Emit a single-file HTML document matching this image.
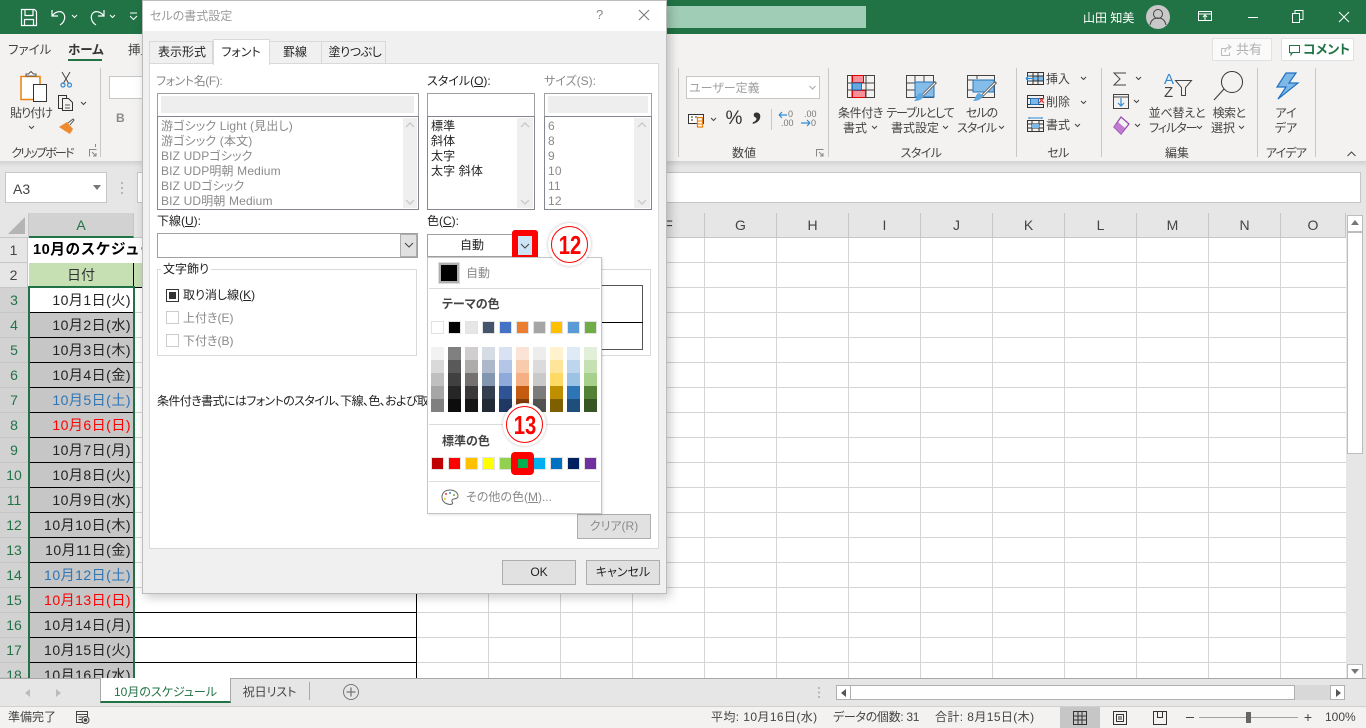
<!DOCTYPE html>
<html lang="ja"><head><meta charset="utf-8"><title>Excel</title>
<style>
html,body{margin:0;padding:0;width:1366px;height:728px;overflow:hidden;background:#fff}
body{position:relative;font-family:"Liberation Sans","Noto Sans CJK JP",sans-serif;font-size:12px;color:#222;font-feature-settings:"palt"}
div,span,svg{position:absolute;box-sizing:border-box}
u{text-decoration:underline}
.t{white-space:nowrap;line-height:16px;height:16px}
.c{transform:translateX(-50%)}
.g{color:#8a8a8a}
.rh{left:0;width:28px;height:25px;line-height:25px;text-align:center;font-size:14px;color:#444;background:#e6e6e6;border-bottom:1px solid #c6c6c6;border-right:1px solid #c6c6c6}
.rs{background:#d2d2d2;color:#217346;border-right:none}
.d{left:29px;width:105px;height:25px;line-height:24px;text-align:right;padding-right:3px;font-size:14px;letter-spacing:.5px;background:#c6c6c6;color:#222;border-bottom:1px solid #000;white-space:nowrap}
.b{left:134px;width:283px;height:25px;background:#fff;border-bottom:1px solid #000;border-right:1px solid #000}
.ch{top:213px;height:25px;width:72px;line-height:24px;text-align:center;font-size:14px;color:#444;background:#e6e6e6;border-right:1px solid #c6c6c6;border-bottom:1px solid #c6c6c6}
.dv{width:1px;background:#c8c8c8;top:68px;height:89px}
.box{background:#fff;border:1px solid #a0a0a0}
.sb{background:#efefef}
.btn{background:#e1e1e1;border:1px solid #adadad;text-align:center;line-height:22px}
.li{white-space:nowrap;line-height:15px;height:15px;letter-spacing:.15px}
.sep{background:#dcdcdc;height:1px;left:429px;width:171px}
.halo{width:43px;height:43px;border-radius:50%;background:#fff;box-shadow:0 0 3px rgba(0,0,0,.25)}
.ring{width:37px;height:37px;border-radius:50%;border:1.500px solid #f00;background:#fff}
.num{white-space:nowrap;height:28px;line-height:28px;font-size:26px;font-weight:bold;color:#f00;transform:translateX(-50%) scaleX(.78)}
</style></head><body>

<!-- title bar -->
<div style="left:0;top:0;width:1366px;height:34px;background:#217346"></div>
<div style="left:420px;top:6px;width:446px;height:22px;background:#a0cdb5"></div>
<svg style="left:0;top:0" width="145" height="34" fill="none" stroke="#fff" stroke-width="1.200">
<path d="M21.500 9.500h13l2 2v14h-15zM25 9.500v6h8v-6M24.500 25.500v-6h9v6"/>
<path d="M52 10v6h6M52.500 15.500c3-4 8-5 10.500-2.500 3 3 2 9-3 12"/>
<path d="M72 15l2.500 2.500 2.500-2.500M110 15l2.500 2.500 2.500-2.500" stroke-width="1"/>
<path d="M104 10v6h-6M103.500 15.500c-3-4-8-5-10.500-2.500-3 3-2 9 3 12"/>
<path d="M130 13h7M130 16l3.500 3.500 3.500-3.500" stroke-width="1"/>
</svg>
<span class="t" style="left:1083px;top:10px;color:#fff;font-size:12px">山田 知美</span>
<svg style="left:1145px;top:4px" width="26" height="26"><circle cx="13" cy="13" r="12" fill="#c8c8c8"/><circle cx="13" cy="10" r="4.500" fill="none" stroke="#444"/><path d="M5 21c1-5 4-7 8-7s7 2 8 7" fill="none" stroke="#444"/></svg>
<svg style="left:1190px;top:0" width="176" height="34" fill="none" stroke="#fff" stroke-width="1">
<path d="M8.500 11.500h13v9h-13zM8.500 14h13M15 20v-5M13 17l2-2 2 2"/>
<path d="M58 17.500h10"/>
<path d="M102.500 13.500h7v9h-7zM105 13v-2.500h8v9h-3.500"/>
<path d="M149 12l10 10M159 12l-10 10"/>
</svg>

<!-- ribbon -->
<div style="left:0;top:34px;width:1366px;height:127px;background:#f3f2f1"></div>
<div style="left:0;top:161px;width:1366px;height:6px;background:linear-gradient(#d2d2d2,#e6e6e6)"></div>
<span class="t" style="left:8px;top:42px;font-size:12.500px;color:#444">ファイル</span>
<span class="t" style="left:68px;top:42px;font-size:12.500px;font-weight:bold;color:#333">ホーム</span>
<div style="left:68px;top:59px;width:34px;height:2px;background:#217346"></div>
<span class="t" style="left:128px;top:42px;font-size:12.500px;color:#444">挿入</span>

<!-- clipboard -->
<svg style="left:0;top:60px" width="142" height="90" fill="none">
<path d="M21 16.500h19v23H21z" stroke="#e9820e" stroke-width="1.500" fill="#fff"/>
<path d="M26 16h10v-2h-2.500l-2.500-2.500-2.500 2.500H26z" stroke="#555" fill="#fff"/>
<path d="M33.500 24.500h13v17h-13z" stroke="#333" fill="#fff"/>
<path d="M62 12l7 12M70 12l-7 12" stroke="#444"/><circle cx="63" cy="25" r="2" stroke="#3d8fd6" stroke-width="1.300"/><circle cx="69.500" cy="25" r="2" stroke="#3d8fd6" stroke-width="1.300"/>
<path d="M58.500 35.500h8v13h-8z" stroke="#333"/><path d="M62.500 38.500h6l4 4v8h-10z" stroke="#333" fill="#f3f2f1"/><path d="M65 45h5M65 48h5" stroke="#555"/>
<path d="M81 42l2.500 2.500 2.500-2.500M29 66l2.500 2.500 2.500-2.500" stroke="#444"/>
<path d="M59 67l8-5 6 7-3 5-5-3z" fill="#ed8b30"/><path d="M68 63l5-4 1 1-4 5" stroke="#555"/>
<path d="M90.500 90h5M95.500 87v-3" stroke="#888"/>
</svg>
<span class="t c" style="left:31px;top:105px;color:#444;letter-spacing:-1px">貼り付け</span>
<span class="t c" style="left:42px;top:145px;color:#444;letter-spacing:-1.800px">クリップボード</span>
<svg style="left:88px;top:148px" width="10" height="10" fill="none" stroke="#888"><path d="M1.500 8.500v-7h7M4 4l4 4M8 5v3H5"/></svg>
<div class="dv" style="left:100px"></div>
<div style="left:109px;top:76px;width:40px;height:23px;background:#fff;border:1px solid #c6c6c6"></div>
<span class="t" style="left:116px;top:110px;font-weight:bold;color:#8a8a8a">B</span>

<!-- number -->
<div class="dv" style="left:678px"></div>
<div style="left:686px;top:76px;width:134px;height:23px;background:#fff;border:1px solid #c6c6c6"></div>
<span class="t g" style="left:689px;top:80px;color:#a0a0a0">ユーザー定義</span>
<svg style="left:808px;top:84px" width="10" height="8" fill="none" stroke="#aaa"><path d="M1.500 2l3 3 3-3"/></svg>
<svg style="left:686px;top:108px" width="140" height="24" fill="none">
<path d="M2.500 6.500h15v9h-15z" stroke="#333" fill="#fff"/><path d="M5 9h2M9 9h2M5 12h2" stroke="#333"/>
<path d="M11.500 9.500h5v9.500h-5z" stroke="#e9820e" fill="#fff" stroke-width="1.300"/><path d="M12 13h4M12 16h4" stroke="#e9820e"/>
<path d="M25 10l2.500 2.500 2.500-2.500" stroke="#444"/>
<path d="M85.500 1v21" stroke="#c8c8c8"/>
<path d="M93 7h8M93 7l3-3M93 7l3 3" stroke="#2e8bd6" stroke-width="1.200"/>
<path d="M115 15h9M124 15l-3-3M124 15l-3 3" stroke="#2e8bd6" stroke-width="1.200"/>
</svg>
<span class="t c" style="left:734px;top:111px;font-size:19px;color:#333">%</span>
<span class="t c" style="left:757px;top:98px;font-size:38px;font-weight:bold;color:#333;font-family:'Liberation Serif',serif">,</span>
<span class="t" style="left:788px;top:106px;font-size:9px;color:#777">0</span>
<span class="t" style="left:781px;top:115px;font-size:9px;color:#777">.00</span>
<span class="t" style="left:804px;top:106px;font-size:9px;color:#777">.00</span>
<span class="t" style="left:811px;top:115px;font-size:9px;color:#777">0</span>
<span class="t c" style="left:744px;top:145px;color:#444">数値</span>
<svg style="left:815px;top:148px" width="10" height="10" fill="none" stroke="#888"><path d="M1.500 8.500v-7h7M4 4l4 4M8 5v3H5"/></svg>

<!-- styles -->
<div class="dv" style="left:828px"></div>
<svg style="left:830px;top:65px" width="186" height="40" fill="none">
<g stroke="#444"><path d="M17.500 10.500h27v22h-27zM17.500 18h27M17.500 25h27M22 10v22M36 10v22"/></g>
<path d="M22.500 10.500h11v7h-11z" fill="#f8909a" stroke="#d00"/><path d="M22.500 25.500h13v7h-13z" fill="#f8909a" stroke="#d00"/><path d="M22.500 18h9v7h-9z" fill="#66a9e0" stroke="#2472b8"/>
<g stroke="#444"><path d="M76.500 10.500h27v22h-27zM76.500 18h27M76.500 25h27M85 10v22M94 10v22"/></g>
<path d="M85 17h19v15H85z" fill="#84bcea" stroke="#2472b8"/>
<path d="M106 17L92 31" stroke="#666" stroke-width="3"/><path d="M105 18L93 30" stroke="#fff"/><path d="M84 36c4 0 9-1 10-6l-4-2c-4 1-3 6-6 8z" fill="#5ea8e0"/>
<g stroke="#444"><path d="M137.500 10.500h27v22h-27zM137.500 15h27M137.500 25h5M147 10v4"/></g>
<path d="M143 15h21v12h-21z" fill="#84bcea" stroke="#2472b8"/>
<path d="M166 17L152 31" stroke="#666" stroke-width="3"/><path d="M165 18L153 30" stroke="#fff"/><path d="M143 36c4 0 9-1 10-6l-4-2c-4 1-3 6-6 8z" fill="#5ea8e0"/>
</svg>
<span class="t c" style="left:860.500px;top:105px;color:#444;letter-spacing:-.4px">条件付き</span>
<span class="t" style="left:843px;top:120px;color:#444">書式</span>
<span class="t c" style="left:920px;top:105px;color:#444;letter-spacing:-1.100px">テーブルとして</span>
<span class="t" style="left:891px;top:120px;color:#444">書式設定</span>
<span class="t c" style="left:981.500px;top:105px;color:#444;letter-spacing:-1px">セルの</span>
<span class="t" style="left:957px;top:120px;color:#444;letter-spacing:-1px">スタイル</span>
<svg style="left:860px;top:124px" width="150" height="8" fill="none" stroke="#444"><path d="M12 2l2.500 2.500L17 2M83 2l2.500 2.500L88 2M139 2l2.500 2.500 2.500-2.500"/></svg>
<span class="t c" style="left:921px;top:145px;color:#444;letter-spacing:-.6px">スタイル</span>

<!-- cells -->
<div class="dv" style="left:1016px"></div>
<svg style="left:1020px;top:65px" width="76" height="75" fill="none">
<path d="M13 11h10v5H13z" fill="#7db8e8"/>
<g stroke="#333"><path d="M7.500 7.500h16v12h-16zM7.500 11h16M7.500 16h16M13 7.500v12M18 7.500v12"/></g>
<path d="M6 13.500h8M6 13.500l3-3M6 13.500l3 3" stroke="#2e8bd6" stroke-width="1.200"/>
<g stroke="#333"><path d="M7.500 30.500h16v3h-16zM7.500 39.500h16v3h-16z"/><path d="M7.500 30v13M23.500 30v4M23.500 39v4"/></g>
<path d="M10.500 33.500h8v6h-8z" fill="#7db8e8" stroke="#2472b8"/><path d="M19 33l5 5M24 33l-5 5" stroke="#e04040" stroke-width="1.400"/>
<path d="M9 54v-2M22 54v-2M9 53h13" stroke="#2e8bd6"/>
<g stroke="#333"><path d="M7.500 55.500h16v11h-16zM7.500 59h16M7.500 63h16M12 55.500v11M19 55.500v11"/></g><path d="M12 59h7v4h-7z" fill="#7db8e8"/>
<path d="M61 12l2.500 2.500L66 12M61 36l2.500 2.500L66 36M55 59l2.500 2.500L60 59" stroke="#444"/>
</svg>
<span class="t" style="left:1046px;top:71px;color:#444">挿入</span>
<span class="t" style="left:1046px;top:94px;color:#444">削除</span>
<span class="t" style="left:1046px;top:117px;color:#444">書式</span>
<span class="t c" style="left:1058px;top:145px;color:#444;letter-spacing:-.6px">セル</span>

<!-- editing -->
<div class="dv" style="left:1101px"></div>
<svg style="left:1105px;top:65px" width="150" height="72" fill="none">
<path d="M21 8h-12l6 6-6 6h12" stroke="#444"/><path d="M31 12l2.500 2.500L36 12M29 35l2.500 2.500L34 35M30 59l2.500 2.500L35 59" stroke="#444"/>
<path d="M8.500 29.500h15v14h-15zM8.500 32h15" stroke="#444"/><path d="M16 33v8M13 38l3 3 3-3" stroke="#2e8bd6" stroke-width="1.200"/>
<path d="M16 52l8 7-8 10-7-7z" stroke="#9d4cb3" stroke-width="1.300" fill="#f3f2f1"/><path d="M9 62l4-5 7 6-4 6z" fill="#c07bd0"/>
<path d="M70.500 15.500h16l-6 7v8h-4v-8z" stroke="#444"/>
<path d="M109 35l10-11" stroke="#444" stroke-width="1.200"/><circle cx="127" cy="17" r="10.500" stroke="#333"/>
</svg>
<span class="t" style="left:1164px;top:72px;font-size:15px;color:#2e8bd6">A</span>
<span class="t" style="left:1164px;top:85px;font-size:15px;color:#444">Z</span>
<span class="t c" style="left:1177px;top:105px;color:#444;letter-spacing:-.2px">並べ替えと</span>
<span class="t" style="left:1149px;top:120px;color:#444;letter-spacing:-1px">フィルター</span>
<span class="t c" style="left:1229px;top:105px;color:#444;letter-spacing:-.6px">検索と</span>
<span class="t" style="left:1211px;top:120px;color:#444">選択</span>
<svg style="left:1190px;top:124px" width="60" height="8" fill="none" stroke="#444"><path d="M7 2l2.500 2.500L12 2M49 2l2.500 2.500L54 2"/></svg>
<span class="t c" style="left:1177px;top:145px;color:#444">編集</span>

<!-- ideas -->
<div class="dv" style="left:1257px"></div>
<svg style="left:1270px;top:68px" width="32" height="34"><path d="M26 5H16L7 19h9L8 31 28 15H19z" fill="#7db8e8" stroke="#1f72c0" stroke-width="1.200"/></svg>
<span class="t c" style="left:1286px;top:105px;color:#444">アイ</span>
<span class="t c" style="left:1286px;top:120px;color:#444">デア</span>
<span class="t c" style="left:1286px;top:145px;color:#444;letter-spacing:-.8px">アイデア</span>
<div class="dv" style="left:1315px"></div>
<svg style="left:1346px;top:150px" width="12" height="8" fill="none" stroke="#444"><path d="M1.500 6l4-4 4 4"/></svg>

<div style="left:1212px;top:38px;width:60px;height:23px;background:#fafafa;border:1px solid #e1e1e1"></div>
<svg style="left:1219px;top:43px" width="14" height="14" fill="none" stroke="#bbb"><path d="M2.500 5.500h4M2.500 5.500v7h8v-3M6 9c0-3 2-5 5-5M9 1.500L12 4 9 6.500"/></svg>
<span class="t" style="left:1236px;top:42px;color:#b0b0b0;font-size:13px">共有</span>
<div style="left:1281px;top:38px;width:73px;height:23px;background:#fff;border:1px solid #e1e1e1"></div>
<svg style="left:1288px;top:43px" width="14" height="14" fill="none" stroke="#217346"><path d="M1.500 2.500h10v7h-7l-1.500 2.500v-2.500h-1.500z"/></svg>
<span class="t" style="left:1303px;top:42px;color:#217346;font-size:13px;font-weight:bold">コメント</span>

<!-- formula bar -->
<div style="left:0;top:167px;width:1366px;height:46px;background:#e6e6e6"></div>
<div style="left:5px;top:172px;width:102px;height:31px;background:#fff;border:1px solid #c6c6c6"></div>
<span class="t" style="left:13px;top:181px;font-size:14px;color:#444">A3</span>
<svg style="left:92px;top:185px" width="10" height="6"><path d="M1 0h8L5 5z" fill="#777"/></svg>
<svg style="left:120px;top:181px" width="4" height="16" fill="#aaa"><circle cx="2" cy="2" r="1"/><circle cx="2" cy="7" r="1"/><circle cx="2" cy="12" r="1"/></svg>
<div style="left:137px;top:172px;width:1224px;height:31px;background:#fff;border:1px solid #c6c6c6"></div>

<!-- sheet -->
<div style="left:0;top:213px;width:29px;height:25px;background:#e6e6e6;border-right:1px solid #c6c6c6;border-bottom:1px solid #c6c6c6"></div>
<svg style="left:8px;top:217px" width="18" height="18"><path d="M17 0v17H0z" fill="#b4b4b4"/></svg>
<div style="left:29px;top:238px;width:1317px;height:440px;background-color:#fff;background-image:repeating-linear-gradient(to bottom,transparent 0,transparent 24px,#d4d4d4 24px,#d4d4d4 25px),repeating-linear-gradient(to right,#d4d4d4 0,#d4d4d4 1px,transparent 1px,transparent 72px);background-position:0 0,387px 0"></div>
<div class="ch" style="left:29px;width:105px;background:#d2d2d2;color:#217346;border-bottom:2px solid #217346">A</div>
<div class="ch" style="left:134px;width:283px"></div>
<div class="ch" style="left:417px"></div>
<div class="ch" style="left:489px"></div>
<div class="ch" style="left:561px"></div>
<div class="ch" style="left:633px">F</div>
<div class="ch" style="left:705px">G</div>
<div class="ch" style="left:777px">H</div>
<div class="ch" style="left:849px">I</div>
<div class="ch" style="left:921px">J</div>
<div class="ch" style="left:993px">K</div>
<div class="ch" style="left:1065px">L</div>
<div class="ch" style="left:1137px">M</div>
<div class="ch" style="left:1209px">N</div>
<div class="ch" style="left:1281px;width:65px">O</div>

<div class="rh" style="top:238px">1</div>
<div class="rh" style="top:263px">2</div>
<div class="rh rs" style="top:288px">3</div>
<div class="rh rs" style="top:313px">4</div>
<div class="rh rs" style="top:338px">5</div>
<div class="rh rs" style="top:363px">6</div>
<div class="rh rs" style="top:388px">7</div>
<div class="rh rs" style="top:413px">8</div>
<div class="rh rs" style="top:438px">9</div>
<div class="rh rs" style="top:463px">10</div>
<div class="rh rs" style="top:488px">11</div>
<div class="rh rs" style="top:513px">12</div>
<div class="rh rs" style="top:538px">13</div>
<div class="rh rs" style="top:563px">14</div>
<div class="rh rs" style="top:588px">15</div>
<div class="rh rs" style="top:613px">16</div>
<div class="rh rs" style="top:638px">17</div>
<div class="rh rs" style="top:663px;height:15px">18</div>

<div style="left:29px;top:238px;width:388px;height:25px;background:#fff;line-height:24px;font-size:14.67px;font-weight:bold;color:#000;padding-left:4px;letter-spacing:.5px;white-space:nowrap;font-feature-settings:normal">10月のスケジュール</div>
<div style="left:29px;top:263px;width:105px;height:25px;background:#c6e0b4;border-bottom:1px solid #000;border-right:1px solid #000;line-height:24px;text-align:center;font-size:14px;color:#333">日付</div>
<div style="left:134px;top:263px;width:283px;height:25px;background:#c6e0b4;border-bottom:1px solid #000"></div>

<div class="d" style="top:288px;background:#fff">10月1日(火)</div>
<div class="d" style="top:313px">10月2日(水)</div>
<div class="d" style="top:338px">10月3日(木)</div>
<div class="d" style="top:363px">10月4日(金)</div>
<div class="d" style="top:388px;color:#2e75b6">10月5日(土)</div>
<div class="d" style="top:413px;color:#f00">10月6日(日)</div>
<div class="d" style="top:438px">10月7日(月)</div>
<div class="d" style="top:463px">10月8日(火)</div>
<div class="d" style="top:488px">10月9日(水)</div>
<div class="d" style="top:513px">10月10日(木)</div>
<div class="d" style="top:538px">10月11日(金)</div>
<div class="d" style="top:563px;color:#2e75b6">10月12日(土)</div>
<div class="d" style="top:588px;color:#f00">10月13日(日)</div>
<div class="d" style="top:613px">10月14日(月)</div>
<div class="d" style="top:638px">10月15日(火)</div>
<div class="d" style="top:663px;height:15px;border-bottom:none;overflow:hidden">10月16日(水)</div>
<div class="b" style="top:588px"></div>
<div class="b" style="top:613px"></div>
<div class="b" style="top:638px"></div>
<div class="b" style="top:663px;height:15px;border-bottom:none"></div>
<div style="left:28px;top:286px;width:2px;height:392px;background:#217346"></div>
<div style="left:133px;top:286px;width:2px;height:392px;background:#217346"></div>
<div style="left:28px;top:286px;width:107px;height:2px;background:#217346"></div>

<!-- vertical scrollbar -->
<div style="left:1346px;top:213px;width:20px;height:465px;background:#e6e6e6"></div>
<div style="left:1347px;top:215px;width:16px;height:17px;background:#fff;border:1px solid #bdbdbd"></div>
<svg style="left:1351px;top:220px" width="8" height="6"><path d="M0 5h8L4 0z" fill="#777"/></svg>
<div style="left:1347px;top:232px;width:16px;height:222px;background:#fff;border:1px solid #bdbdbd"></div>
<div style="left:1347px;top:664px;width:16px;height:15px;background:#fff;border:1px solid #bdbdbd"></div>
<svg style="left:1351px;top:669px" width="8" height="6"><path d="M0 0h8L4 5z" fill="#777"/></svg>

<!-- tabs -->
<div style="left:0;top:678px;width:1366px;height:29px;background:#e6e6e6;border-top:1px solid #a8a8a8;border-bottom:1px solid #d0d0d0"></div>
<svg style="left:25px;top:688px" width="40" height="10" fill="#bbb"><path d="M5 1v8L0 5zM31 1v8l5-4z"/></svg>
<div style="left:100px;top:678px;width:131px;height:25px;background:#fff;border:1px solid #a8a8a8;border-top:none;border-bottom:2px solid #217346"></div>
<span class="t c" style="left:165.500px;top:684px;color:#217346;font-size:12px">10月のスケジュール</span>
<span class="t c" style="left:269.500px;top:684px;color:#444;font-size:12px">祝日リスト</span>
<div style="left:309px;top:682px;width:1px;height:18px;background:#a8a8a8"></div>
<svg style="left:342px;top:683px" width="18" height="18" fill="none" stroke="#777"><circle cx="9" cy="9" r="7.500"/><path d="M4.500 9h9M9 4.500v9" stroke-width="1.300"/></svg>
<svg style="left:817px;top:686px" width="4" height="14" fill="#aaa"><circle cx="2" cy="2" r="1"/><circle cx="2" cy="6.500" r="1"/><circle cx="2" cy="11" r="1"/></svg>
<div style="left:836px;top:685px;width:509px;height:15px;background:#d8d8d8"></div>
<div style="left:836px;top:685px;width:459px;height:15px;background:#fff;border:1px solid #b0b0b0"></div>
<div style="left:836px;top:685px;width:15px;height:15px;background:#fff;border:1px solid #b0b0b0"></div>
<div style="left:1330px;top:685px;width:15px;height:15px;background:#fff;border:1px solid #b0b0b0"></div>
<svg style="left:841px;top:689px" width="6" height="8" fill="#555"><path d="M5 0v8L0 4z"/></svg>
<svg style="left:1335px;top:689px" width="6" height="8" fill="#555"><path d="M1 0v8l5-4z"/></svg>

<!-- status -->
<div style="left:0;top:707px;width:1366px;height:21px;background:#f3f2f1"></div>
<span class="t" style="left:8px;top:709px;color:#444">準備完了</span>
<svg style="left:75px;top:710px" width="16" height="15" fill="none" stroke="#444"><path d="M1.500 1.500h11v11h-11zM1.500 4.500h11M3.500 7h4M3.500 9.500h3"/><circle cx="10.500" cy="10" r="3.500" fill="#f3f2f1"/><circle cx="10.500" cy="10" r="1.300" fill="#444"/></svg>
<span class="t" style="left:711px;top:709px;color:#444;letter-spacing:.4px">平均: 10月16日(水)</span>
<span class="t" style="left:833px;top:709px;color:#444;letter-spacing:-.3px">データの個数: 31</span>
<span class="t" style="left:935px;top:709px;color:#444;letter-spacing:.4px">合計: 8月15日(木)</span>
<div style="left:1060px;top:707px;width:40px;height:21px;background:#c6c6c6"></div>
<svg style="left:1060px;top:707px" width="120" height="21" fill="none" stroke="#333"><path d="M13.500 4.500h13v13h-13zM13.500 9h13M13.500 13h13M18 4.500v13M22 4.500v13"/><path d="M53.500 4.500h13v13h-13zM56.500 7.500h7v7h-7zM58 10h4M58 12h4"/><path d="M93.500 4.500h13v13h-13zM97.500 4.500v6h5v-6"/></svg>
<div style="left:1186px;top:717px;width:8px;height:1px;background:#444"></div>
<div style="left:1199px;top:717px;width:99px;height:1px;background:#a0a0a0"></div>
<div style="left:1246px;top:712px;width:5px;height:11px;background:#666"></div>
<span class="t c" style="left:1308px;top:709px;font-size:14px;color:#444">+</span>
<span class="t" style="left:1325px;top:709px;color:#444">100%</span>

<!-- dialog -->
<div style="left:142px;top:0;width:525px;height:594px;background:#f0f0f0;border:1px solid #bcbcbc;box-shadow:3px 3px 10px rgba(0,0,0,.22)"></div>
<div style="left:143px;top:1px;width:523px;height:30px;background:#fff"></div>
<span class="t" style="left:150px;top:8px;color:#9a9a9a">セルの書式設定</span>
<span class="t" style="left:596px;top:7px;color:#888;font-size:13px">?</span>
<svg style="left:637px;top:8px" width="14" height="14" fill="none" stroke="#777"><path d="M2 2l10 10M12 2L2 12"/></svg>

<!-- tabs -->
<div style="left:149px;top:41px;width:64px;height:23px;background:#f0f0f0;border:1px solid #d9d9d9"></div>
<div style="left:269px;top:41px;width:53px;height:23px;background:#f0f0f0;border:1px solid #d9d9d9"></div>
<div style="left:321px;top:41px;width:65px;height:23px;background:#f0f0f0;border:1px solid #d9d9d9"></div>
<div style="left:149px;top:63px;width:510px;height:486px;background:#fff;border:1px solid #d9d9d9"></div>
<div style="left:213px;top:39px;width:57px;height:26px;background:#fff;border:1px solid #d9d9d9;border-bottom:none"></div>
<span class="t c" style="left:182px;top:44px;color:#222">表示形式</span>
<span class="t c" style="left:241px;top:44px;color:#222">フォント</span>
<span class="t c" style="left:295px;top:44px;color:#222">罫線</span>
<span class="t c" style="left:355px;top:44px;color:#222;letter-spacing:-.4px">塗りつぶし</span>

<!-- font name -->
<span class="t g" style="left:156px;top:73px;letter-spacing:-.4px">フォント名(F):</span>
<div class="box" style="left:157px;top:93px;width:262px;height:24px"></div>
<div style="left:161px;top:96px;width:253px;height:17px;background:#eee"></div>
<div class="box" style="left:157px;top:116px;width:262px;height:94px;border-color:#828790"></div>
<div class="sb" style="left:403px;top:118px;width:14px;height:90px"></div>
<svg style="left:405px;top:122px" width="10" height="84" fill="none" stroke="#ccc" stroke-width="1.500"><path d="M1 5l4-4 4 4M1 78l4 4 4-4"/></svg>
<div class="li g" style="left:161px;top:119px">游ゴシック Light (見出し)</div>
<div class="li g" style="left:161px;top:134px">游ゴシック (本文)</div>
<div class="li g" style="left:161px;top:149px">BIZ UDPゴシック</div>
<div class="li g" style="left:161px;top:164px">BIZ UDP明朝 Medium</div>
<div class="li g" style="left:161px;top:179px">BIZ UDゴシック</div>
<div class="li g" style="left:161px;top:194px">BIZ UD明朝 Medium</div>

<!-- style -->
<span class="t" style="left:427px;top:73px">スタイル(<u>O</u>):</span>
<div class="box" style="left:427px;top:93px;width:108px;height:24px"></div>
<div class="box" style="left:427px;top:116px;width:108px;height:94px;border-color:#828790"></div>
<div class="sb" style="left:517px;top:118px;width:16px;height:90px"></div>
<svg style="left:520px;top:122px" width="10" height="84" fill="none" stroke="#ccc" stroke-width="1.500"><path d="M1 5l4-4 4 4M1 78l4 4 4-4"/></svg>
<div class="li" style="left:431px;top:119px">標準</div>
<div class="li" style="left:431px;top:134px">斜体</div>
<div class="li" style="left:431px;top:149px">太字</div>
<div class="li" style="left:431px;top:164px">太字 斜体</div>

<!-- size -->
<span class="t g" style="left:544px;top:73px">サイズ(S):</span>
<div class="box" style="left:544px;top:93px;width:108px;height:24px"></div>
<div style="left:548px;top:96px;width:100px;height:17px;background:#eee"></div>
<div class="box" style="left:544px;top:116px;width:108px;height:94px;border-color:#828790"></div>
<div class="sb" style="left:634px;top:118px;width:16px;height:90px"></div>
<svg style="left:637px;top:122px" width="10" height="84" fill="none" stroke="#ccc" stroke-width="1.500"><path d="M1 5l4-4 4 4M1 78l4 4 4-4"/></svg>
<div class="li g" style="left:548px;top:119px">6</div>
<div class="li g" style="left:548px;top:134px">8</div>
<div class="li g" style="left:548px;top:149px">9</div>
<div class="li g" style="left:548px;top:164px">10</div>
<div class="li g" style="left:548px;top:179px">11</div>
<div class="li g" style="left:548px;top:194px">12</div>

<!-- underline -->
<span class="t" style="left:157px;top:213px">下線(<u>U</u>):</span>
<div class="box" style="left:157px;top:233px;width:261px;height:25px"></div>
<div style="left:400px;top:234px;width:17px;height:23px;background:#e1e1e1;border:1px solid #adadad"></div>
<svg style="left:404px;top:242px" width="10" height="7" fill="none" stroke="#444"><path d="M1 1l4 4 4-4"/></svg>

<!-- decoration -->
<div style="left:157px;top:269px;width:260px;height:87px;border:1px solid #d9d9d9"></div>
<span class="t" style="left:161px;top:261px;background:#fff;padding:0 2px">文字飾り</span>
<div style="left:166px;top:289px;width:13px;height:13px;border:1px solid #333;background:#fff"></div>
<div style="left:169px;top:292px;width:7px;height:7px;background:#333"></div>
<span class="t" style="left:183px;top:287px">取り消し線(<u>K</u>)</span>
<div style="left:166px;top:311px;width:13px;height:13px;border:1px solid #ccc;background:#fff"></div>
<span class="t g" style="left:183px;top:310px">上付き(E)</span>
<div style="left:166px;top:334px;width:13px;height:13px;border:1px solid #ccc;background:#fff"></div>
<span class="t g" style="left:183px;top:333px">下付き(B)</span>

<span class="t" style="left:157px;top:393px;width:271px;overflow:hidden;letter-spacing:-.6px">条件付き書式にはフォントのスタイル、下線、色、および取り消し線を設定できます。</span>

<!-- preview -->
<div style="left:428px;top:269px;width:223px;height:87px;border:1px solid #d9d9d9"></div>
<div style="left:500px;top:285px;width:143px;height:65px;border:1px solid #555"></div>
<div style="left:500px;top:322px;width:143px;height:1px;background:#000"></div>

<!-- color -->
<span class="t" style="left:427px;top:213px">色(<u>C</u>):</span>
<div class="box" style="left:427px;top:234px;width:90px;height:23px"></div>
<span class="t c" style="left:472px;top:237px;color:#222">自動</span>
<div style="left:512px;top:230px;width:26px;height:31px;background:#f00;border-radius:3px"></div>
<div style="left:518px;top:236px;width:14px;height:19px;background:#cce4f7"></div>
<svg style="left:520px;top:243px" width="10" height="7" fill="none" stroke="#444"><path d="M1 1l4 4 4-4"/></svg>

<!-- clear and buttons -->
<div class="btn" style="left:577px;top:514px;width:74px;height:25px;color:#8a8a8a">クリア(R)</div>
<div class="btn" style="left:502px;top:560px;width:74px;height:25px">OK</div>
<div class="btn" style="left:586px;top:560px;width:74px;height:25px">キャンセル</div>

<!-- popup -->
<div style="left:427px;top:257px;width:175px;height:257px;background:#fff;border:1px solid #c6c6c6;box-shadow:1px 1px 2px rgba(0,0,0,.12)"></div>
<div style="left:439px;top:263px;width:20px;height:20px;background:#000;border:2px solid #b0b0b0;outline:1px solid #ddd"></div>
<span class="t g" style="left:466px;top:265px">自動</span>
<div class="sep" style="top:288px"></div>
<span class="t" style="left:442px;top:296px;font-weight:bold;color:#444">テーマの色</span>
<svg style="left:0;top:0" width="1366" height="728" stroke="#e2e2e2">
<rect x="431.500" y="321.500" width="12" height="12" fill="#fff"/><rect x="448.500" y="321.500" width="12" height="12" fill="#000"/><rect x="465.500" y="321.500" width="12" height="12" fill="#e7e6e6"/><rect x="482.500" y="321.500" width="12" height="12" fill="#44546a"/><rect x="499.500" y="321.500" width="12" height="12" fill="#4472c4"/><rect x="516.500" y="321.500" width="12" height="12" fill="#ed7d31"/><rect x="533.500" y="321.500" width="12" height="12" fill="#a5a5a5"/><rect x="550.500" y="321.500" width="12" height="12" fill="#ffc000"/><rect x="567.500" y="321.500" width="12" height="12" fill="#5b9bd5"/><rect x="584.500" y="321.500" width="12" height="12" fill="#70ad47"/>
<g stroke="none">
<rect x="431" y="347" width="13" height="13" fill="#f2f2f2"/><rect x="431" y="360" width="13" height="13" fill="#d9d9d9"/><rect x="431" y="373" width="13" height="13" fill="#bfbfbf"/><rect x="431" y="386" width="13" height="13" fill="#a6a6a6"/><rect x="431" y="399" width="13" height="13" fill="#808080"/>
<rect x="448" y="347" width="13" height="13" fill="#808080"/><rect x="448" y="360" width="13" height="13" fill="#595959"/><rect x="448" y="373" width="13" height="13" fill="#404040"/><rect x="448" y="386" width="13" height="13" fill="#262626"/><rect x="448" y="399" width="13" height="13" fill="#0d0d0d"/>
<rect x="465" y="347" width="13" height="13" fill="#d0cece"/><rect x="465" y="360" width="13" height="13" fill="#aeabab"/><rect x="465" y="373" width="13" height="13" fill="#757171"/><rect x="465" y="386" width="13" height="13" fill="#3a3838"/><rect x="465" y="399" width="13" height="13" fill="#171616"/>
<rect x="482" y="347" width="13" height="13" fill="#d6dce4"/><rect x="482" y="360" width="13" height="13" fill="#adb9ca"/><rect x="482" y="373" width="13" height="13" fill="#8497b0"/><rect x="482" y="386" width="13" height="13" fill="#333f4f"/><rect x="482" y="399" width="13" height="13" fill="#222b35"/>
<rect x="499" y="347" width="13" height="13" fill="#d9e2f3"/><rect x="499" y="360" width="13" height="13" fill="#b4c6e7"/><rect x="499" y="373" width="13" height="13" fill="#8eaadb"/><rect x="499" y="386" width="13" height="13" fill="#2f5496"/><rect x="499" y="399" width="13" height="13" fill="#1f3864"/>
<rect x="516" y="347" width="13" height="13" fill="#fbe4d5"/><rect x="516" y="360" width="13" height="13" fill="#f7cbac"/><rect x="516" y="373" width="13" height="13" fill="#f4b083"/><rect x="516" y="386" width="13" height="13" fill="#c55a11"/><rect x="516" y="399" width="13" height="13" fill="#833c0b"/>
<rect x="533" y="347" width="13" height="13" fill="#ededed"/><rect x="533" y="360" width="13" height="13" fill="#dbdbdb"/><rect x="533" y="373" width="13" height="13" fill="#c9c9c9"/><rect x="533" y="386" width="13" height="13" fill="#7b7b7b"/><rect x="533" y="399" width="13" height="13" fill="#525252"/>
<rect x="550" y="347" width="13" height="13" fill="#fff2cc"/><rect x="550" y="360" width="13" height="13" fill="#ffe599"/><rect x="550" y="373" width="13" height="13" fill="#ffd966"/><rect x="550" y="386" width="13" height="13" fill="#bf8f00"/><rect x="550" y="399" width="13" height="13" fill="#7f6000"/>
<rect x="567" y="347" width="13" height="13" fill="#deeaf6"/><rect x="567" y="360" width="13" height="13" fill="#bdd6ee"/><rect x="567" y="373" width="13" height="13" fill="#9cc2e5"/><rect x="567" y="386" width="13" height="13" fill="#2e75b5"/><rect x="567" y="399" width="13" height="13" fill="#1e4e79"/>
<rect x="584" y="347" width="13" height="13" fill="#e2efd9"/><rect x="584" y="360" width="13" height="13" fill="#c5e0b3"/><rect x="584" y="373" width="13" height="13" fill="#a8d08d"/><rect x="584" y="386" width="13" height="13" fill="#538135"/><rect x="584" y="399" width="13" height="13" fill="#385623"/>
</g>
<rect x="431.500" y="457.500" width="12" height="12" fill="#c00000"/><rect x="448.500" y="457.500" width="12" height="12" fill="#f00"/><rect x="465.500" y="457.500" width="12" height="12" fill="#ffc000"/><rect x="482.500" y="457.500" width="12" height="12" fill="#ff0"/><rect x="499.500" y="457.500" width="12" height="12" fill="#92d050"/><rect x="533.500" y="457.500" width="12" height="12" fill="#00b0f0"/><rect x="550.500" y="457.500" width="12" height="12" fill="#0070c0"/><rect x="567.500" y="457.500" width="12" height="12" fill="#002060"/><rect x="584.500" y="457.500" width="12" height="12" fill="#7030a0"/>
<rect x="511" y="452" width="23" height="23" rx="4" fill="#f00" stroke="none"/><rect x="518" y="459" width="10" height="9" fill="#00b050" stroke="none"/>
<g fill="none" stroke="#666"><path d="M442 497c0-5 4-7 8-7 5 0 8 3 8 6 0 4-5 2-6 4s2 3 0 4-10 0-10-7z"/></g>
<circle cx="446" cy="494" r="1" fill="#e04040" stroke="none"/><circle cx="450" cy="493" r="1" fill="#2e8bd6" stroke="none"/><circle cx="454" cy="495" r="1" fill="#70ad47" stroke="none"/><circle cx="445" cy="499" r="1" fill="#ffc000" stroke="none"/>
</svg>
<div class="sep" style="top:424px"></div>
<span class="t" style="left:442px;top:433px;font-weight:bold;color:#444">標準の色</span>
<div class="sep" style="top:481px"></div>
<span class="t g" style="left:466px;top:489px">その他の色(<u>M</u>)...</span>

<!-- number callouts -->
<div class="halo" style="left:548px;top:223px"></div>
<div class="ring" style="left:551px;top:226px"></div>
<span class="num" style="left:569.500px;top:231px">12</span>
<div class="halo" style="left:503px;top:403px"></div>
<div class="ring" style="left:506px;top:406px"></div>
<span class="num" style="left:524.500px;top:411px">13</span>
</body></html>
